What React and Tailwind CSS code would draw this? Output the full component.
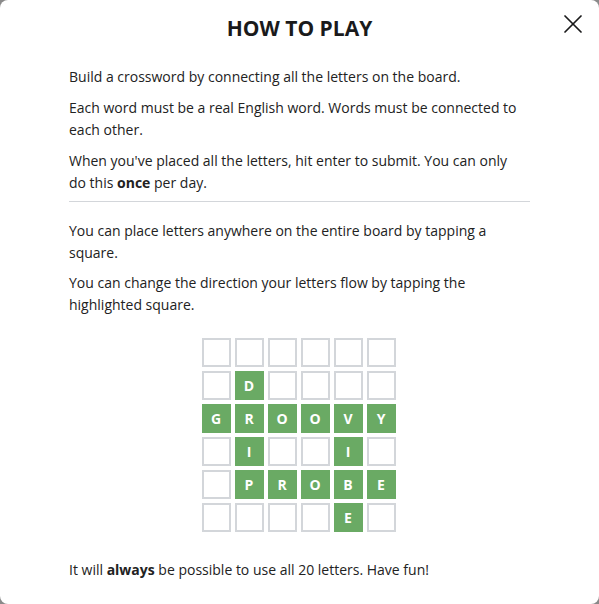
import { X } from "lucide-react";

const board = [
    ["", "", "", "", "", ""],
    ["", "D", "", "", "", ""],
    ["G", "R", "O", "O", "V", "Y"],
    ["", "I", "", "", "I", ""],
    ["", "P", "R", "O", "B", "E"],
    ["", "", "", "", "E", ""],
];

const Tile = ({ letter }) => {
    if (letter) {
        return (
            <div className="w-[29px] h-[29px] bg-[#6aaa64] text-white flex items-center justify-center text-[14px] font-bold">
                {letter}
            </div>
        );
    }
    return <div className="w-[29px] h-[29px] border-2 border-[#d3d6da] bg-white" />;
};

const App = () => {
    return (
        <div className="min-h-screen bg-[#8a8a8a]">
            <div
                className="relative h-[604px] bg-white rounded-lg text-[#1a1a1b]"
                style={{ fontFamily: '"Open Sans", "Noto Sans", sans-serif' }}
            >
                <h1 className="pt-[14px] text-center text-[21px] font-bold leading-[28px]">
                    HOW TO PLAY
                </h1>
                <button className="absolute top-[8px] right-[10px] text-[#1a1a1b]">
                    <X size={32} strokeWidth={1.3} />
                </button>

                <div className="px-[69px] pt-[24px] text-[14px] leading-[22px] text-[#222]">
                    <div className="max-w-[455px] flex flex-col gap-[9px]">
                        <p>Build a crossword by connecting all the letters on the board.</p>
                        <p>Each word must be a real English word. Words must be connected to each other.</p>
                        <p>
                            When you've placed all the letters, hit enter to submit. You can only do this <b>once</b> per day.
                        </p>
                    </div>

                    <hr className="mt-[7px] mb-[18px] border-[#d3d6da]" />

                    <div className="max-w-[455px] flex flex-col gap-[8px]">
                        <p>You can place letters anywhere on the entire board by tapping a square.</p>
                        <p>You can change the direction your letters flow by tapping the highlighted square.</p>
                    </div>

                    <div className="flex justify-center mt-[22px] mb-[27px] -translate-x-px">
                        <div className="grid grid-cols-6 gap-[4px]">
                            {board.flat().map((letter, i) => (
                                <Tile key={i} letter={letter} />
                            ))}
                        </div>
                    </div>

                    <p>
                        It will <b>always</b> be possible to use all 20 letters. Have fun!
                    </p>
                </div>
            </div>
        </div>
    );
};

export default App;
